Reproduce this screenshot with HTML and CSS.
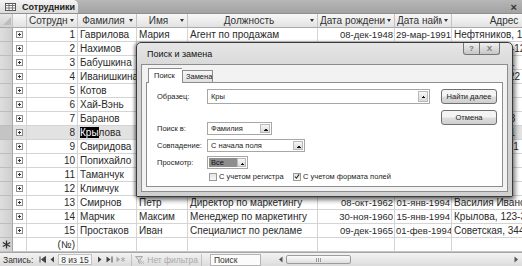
FILE: index.html
```html
<!DOCTYPE html>
<html lang="ru">
<head>
    <meta charset="UTF-8">
    <title>Сотрудники</title>
    <link rel="stylesheet" href="styles.css">
</head>
<body>
    <div class="doc-tabs">
        <div class="doc-tab">
            <svg width="11" height="8" viewBox="0 0 11 8"><rect x="0.5" y="0.5" width="10" height="7" fill="#fff" stroke="#555"/><path d="M0.5 2.5h10M0.5 5h10M4 0.5v7M7.5 0.5v7" stroke="#777" fill="none"/></svg>
            <span>Сотрудники</span>
        </div>
        <span class="doc-close">×</span>
    </div>

    <div class="sheet">
        <div class="row head">
            <div class="cell sel corner"><svg width="8" height="8" viewBox="0 0 8 8"><path d="M8 0V8H0Z" fill="#bdbdbd"/></svg></div>
            <div class="cell"></div>
            <div class="cell hcell left"><span>Сотрудник</span><i class="arrow"></i></div>
            <div class="cell hcell"><span>Фамилия</span><i class="arrow"></i></div>
            <div class="cell hcell"><span>Имя</span><i class="arrow"></i></div>
            <div class="cell hcell"><span>Должность</span><i class="arrow"></i></div>
            <div class="cell hcell left"><span>Дата рождения</span><i class="arrow"></i></div>
            <div class="cell hcell left"><span>Дата найма</span><i class="arrow"></i></div>
            <div class="cell hcell"><span>Адрес</span><i class="arrow"></i></div>
        </div>
        <div class="row"><div class="cell sel"></div><div class="cell exp"><b class="plus"></b></div><div class="cell num">1</div><div class="cell">Гаврилова</div><div class="cell">Мария</div><div class="cell">Агент по продажам</div><div class="cell num date">08-дек-1948</div><div class="cell num date">29-мар-1991</div><div class="cell">Нефтяников, 14</div></div>
        <div class="row"><div class="cell sel"></div><div class="cell exp"><b class="plus"></b></div><div class="cell num">2</div><div class="cell">Нахимов</div><div class="cell">Андрей</div><div class="cell">Вице-президент по продажам</div><div class="cell num date">19-фев-1952</div><div class="cell num date">14-авг-1992</div><div class="cell">Морская, 25-12</div></div>
        <div class="row"><div class="cell sel"></div><div class="cell exp"><b class="plus"></b></div><div class="cell num">3</div><div class="cell">Бабушкина</div><div class="cell">Ирина</div><div class="cell">Агент по продажам</div><div class="cell num date">30-авг-1963</div><div class="cell num date">01-апр-1992</div><div class="cell">Цветочная, 1</div></div>
        <div class="row"><div class="cell sel"></div><div class="cell exp"><b class="plus"></b></div><div class="cell num">4</div><div class="cell">Иванишкина</div><div class="cell">Елена</div><div class="cell">Агент по продажам</div><div class="cell num date">19-сен-1958</div><div class="cell num date">03-май-1993</div><div class="cell">Садовая, 4-22</div></div>
        <div class="row"><div class="cell sel"></div><div class="cell exp"><b class="plus"></b></div><div class="cell num">5</div><div class="cell">Котов</div><div class="cell">Степан</div><div class="cell">Менеджер по продажам</div><div class="cell num date">04-мар-1955</div><div class="cell num date">17-окт-1993</div><div class="cell">Лесная, 14-5</div></div>
        <div class="row"><div class="cell sel"></div><div class="cell exp"><b class="plus"></b></div><div class="cell num">6</div><div class="cell">Хай-Вэнь</div><div class="cell">Михаил</div><div class="cell">Агент по продажам</div><div class="cell num date">02-июл-1963</div><div class="cell num date">17-окт-1993</div><div class="cell">Луговая, 12</div></div>
        <div class="row"><div class="cell sel"></div><div class="cell exp"><b class="plus"></b></div><div class="cell num">7</div><div class="cell">Баранов</div><div class="cell">Роберт</div><div class="cell">Агент по продажам</div><div class="cell num date">29-май-1960</div><div class="cell num date">02-янв-1994</div><div class="cell">Пушкина, 8-3</div></div>
        <div class="row current"><div class="cell sel"></div><div class="cell exp"><b class="plus"></b></div><div class="cell num">8</div><div class="cell"><span class="hit">Кры</span>лова</div><div class="cell">Лаура</div><div class="cell">Координатор продаж</div><div class="cell num date">09-янв-1958</div><div class="cell num date">05-мар-1994</div><div class="cell">Кленовая, 41</div></div>
        <div class="row"><div class="cell sel"></div><div class="cell exp"><b class="plus"></b></div><div class="cell num">9</div><div class="cell">Свиридова</div><div class="cell">Анна</div><div class="cell">Агент по продажам</div><div class="cell num date">27-янв-1966</div><div class="cell num date">15-ноя-1994</div><div class="cell">Зелёная, 9-71</div></div>
        <div class="row"><div class="cell sel"></div><div class="cell exp"><b class="plus"></b></div><div class="cell num">10</div><div class="cell">Попихайло</div><div class="cell">Ольга</div><div class="cell">Агент по продажам</div><div class="cell num date">11-апр-1961</div><div class="cell num date">20-июн-1994</div><div class="cell">Чехова, 33</div></div>
        <div class="row"><div class="cell sel"></div><div class="cell exp"><b class="plus"></b></div><div class="cell num">11</div><div class="cell">Таманчук</div><div class="cell">Сергей</div><div class="cell">Агент по продажам</div><div class="cell num date">16-июл-1964</div><div class="cell num date">03-авг-1994</div><div class="cell">Кирова, 12-3</div></div>
        <div class="row"><div class="cell sel"></div><div class="cell exp"><b class="plus"></b></div><div class="cell num">12</div><div class="cell">Климчук</div><div class="cell">Нина</div><div class="cell">Секретарь</div><div class="cell num date">21-сен-1967</div><div class="cell num date">12-окт-1994</div><div class="cell">Лесная, 3-к</div></div>
        <div class="row"><div class="cell sel"></div><div class="cell exp"><b class="plus"></b></div><div class="cell num">13</div><div class="cell">Смирнов</div><div class="cell">Петр</div><div class="cell">Директор по маркетингу</div><div class="cell num date">08-окт-1962</div><div class="cell num date">01-янв-1994</div><div class="cell">Василия Иванова, 5</div></div>
        <div class="row"><div class="cell sel"></div><div class="cell exp"><b class="plus"></b></div><div class="cell num">14</div><div class="cell">Марчик</div><div class="cell">Максим</div><div class="cell">Менеджер по маркетингу</div><div class="cell num date">30-ноя-1960</div><div class="cell num date">15-янв-1994</div><div class="cell">Крылова, 123-3</div></div>
        <div class="row"><div class="cell sel"></div><div class="cell exp"><b class="plus"></b></div><div class="cell num">15</div><div class="cell">Простаков</div><div class="cell">Иван</div><div class="cell">Специалист по рекламе</div><div class="cell num date">09-дек-1965</div><div class="cell num date">01-фев-1994</div><div class="cell">Советская, 344-1</div></div>
        <div class="row new"><div class="cell sel"><svg width="9" height="9" viewBox="0 0 9 9"><path d="M4.5 0.5v8M0.8 2.5l7.4 4M0.8 6.5l7.4-4" stroke="#333" stroke-width="1.3"/></svg></div><div class="cell exp"></div><div class="cell num">(№)</div><div class="cell"></div><div class="cell"></div><div class="cell"></div><div class="cell"></div><div class="cell"></div><div class="cell"></div></div>
    </div>

    <div class="status">
        <span class="rec-label">Запись:</span>
        <svg class="nav" width="7" height="7" viewBox="0 0 7 7"><path d="M1 0.5v6M6.5 0.5v6L2.5 3.5Z" stroke="#444" fill="#444" stroke-width="1"/></svg>
        <svg class="nav" width="6" height="7" viewBox="0 0 6 7"><path d="M5 0.5v6L1.5 3.5Z" fill="#444"/></svg>
        <span class="rec-box">8 из 15</span>
        <svg class="nav" width="6" height="7" viewBox="0 0 6 7"><path d="M1 0.5v6L4.5 3.5Z" fill="#444"/></svg>
        <svg class="nav" width="7" height="7" viewBox="0 0 7 7"><path d="M0.5 0.5v6L4.5 3.5Z" fill="#444"/><path d="M6 0.5v6" stroke="#444"/></svg>
        <svg class="nav" width="9" height="7" viewBox="0 0 9 7"><path d="M0.5 0.5v6L4 3.5Z" fill="#aaa"/><path d="M7 1v5M5 2.2l4 2.6M5 4.8l4-2.6" stroke="#aaa" stroke-width="0.9"/></svg>
        <span class="filter">
            <svg width="9" height="8" viewBox="0 0 9 8"><path d="M0.5 0.5h7L5 4v3.5L3.5 6.5V4Z" fill="#ddd" stroke="#aaa"/><path d="M6 5l3 3M9 5l-3 3" stroke="#bbb"/></svg>
            Нет фильтра
        </span>
        <span class="search-box">Поиск</span>
        <div class="hscroll">
            <svg width="5" height="7" viewBox="0 0 5 7"><path d="M4.5 0.5v6L1 3.5Z" fill="#555"/></svg>
            <div class="track"><div class="thumb"><i></i></div></div>
            <svg width="5" height="7" viewBox="0 0 5 7"><path d="M0.5 0.5v6L4 3.5Z" fill="#555"/></svg>
        </div>
    </div>

    <div class="dialog">
        <div class="dlg-title">
            <span>Поиск и замена</span>
            <div class="caption-btns">
                <span class="cap help">?</span>
                <span class="cap close">X</span>
            </div>
        </div>
        <div class="dlg-client">
            <div class="dlg-tabs">
                <span class="dlg-tab active">Поиск</span>
                <span class="dlg-tab">Замена</span>
            </div>
            <div class="dlg-panel">
                <div class="dlg-form">
                    <div class="frow pattern">
                        <label>Образец:</label>
                        <div class="combo wide"><span class="val">Кры</span><i class="drop"></i></div>
                    </div>
                    <div class="frow">
                        <label>Поиск в:</label>
                        <div class="combo w-field"><span class="val">Фамилия</span><i class="drop"></i></div>
                    </div>
                    <div class="frow">
                        <label>Совпадение:</label>
                        <div class="combo w-match"><span class="val">С начала поля</span><i class="drop"></i></div>
                    </div>
                    <div class="frow">
                        <label>Просмотр:</label>
                        <div class="combo w-dir"><span class="val picked">Все</span><i class="drop"></i></div>
                    </div>
                    <div class="checks">
                        <span class="check first"><b class="box"></b>С учетом регистра</span>
                        <span class="check"><b class="box"><svg width="7" height="7" viewBox="0 0 7 7"><path d="M1 3.5l1.8 2L6 1" stroke="#222" stroke-width="1.2" fill="none"/></svg></b>С учетом формата полей</span>
                    </div>
                </div>
                <div class="dlg-buttons">
                    <span class="btn">Найти далее</span>
                    <span class="btn">Отмена</span>
                </div>
            </div>
        </div>
    </div>
</body>
</html>
```

FILE: styles.css
```css
body {
    margin: 0;
    width: 522px;
    height: 266px;
    overflow: hidden;
    position: relative;
    display: flex;
    flex-direction: column;
    font-family: "Liberation Sans", Arial, sans-serif;
    background: #fff;
    color: #2a2a2a;
}

/* document tab strip */
.doc-tabs {
    height: 14px;
    flex: none;
    display: flex;
    align-items: flex-end;
    background: linear-gradient(#b7b7b7, #a2a2a2);
    border-bottom: 1px solid #8f8f8f;
    box-sizing: border-box;
}
.doc-tab {
    height: 13px;
    width: 78px;
    display: flex;
    align-items: center;
    gap: 6px;
    padding-left: 5px;
    box-sizing: border-box;
    background: linear-gradient(#f4f4f4, #dcdcdc);
    border-radius: 0 5px 0 0;
    font-size: 9px;
    font-weight: bold;
    color: #222;
}
.doc-close {
    margin-left: auto;
    margin-right: 5px;
    align-self: center;
    font-size: 11px;
    font-weight: bold;
    line-height: 10px;
    color: #333;
}

/* datasheet */
.sheet {
    flex: none;
    width: 564px;
}
.row {
    display: grid;
    grid-template-columns: 13px 14px 51px 59px 51px 130px 77px 57px 112px;
    height: 14px;
}
.cell {
    border-right: 1px solid #d4d4d4;
    border-bottom: 1px solid #d4d4d4;
    padding: 0 2px;
    font-size: 10px;
    line-height: 13px;
    white-space: nowrap;
    overflow: hidden;
}
.num {
    text-align: right;
}
.date {
    font-size: 9.5px;
    padding: 0 1px;
}
.sel {
    padding: 0;
    background: linear-gradient(90deg, #dedede, #cfcfcf);
    border-right-color: #a6a6a6;
    border-bottom-color: #bdbdbd;
    display: flex;
    align-items: center;
    justify-content: center;
}
.corner {
    align-items: flex-end;
    justify-content: flex-end;
    padding: 0 1px 2px 0;
}
.exp {
    display: flex;
    align-items: center;
    justify-content: center;
    padding: 0;
}
.plus {
    width: 7px;
    height: 7px;
    box-sizing: border-box;
    border: 1px solid #8c8c8c;
    background:
        linear-gradient(#333, #333) center / 3px 1px no-repeat,
        linear-gradient(#333, #333) center / 1px 3px no-repeat,
        #fafafa;
}
.head .cell {
    background: linear-gradient(#f8f8f8, #e2e2e2);
    border-right-color: #c4c4c4;
    border-bottom-color: #a9a9a9;
    color: #333;
}
.head .sel {
    background: linear-gradient(#e6e6e6, #d2d2d2);
}
.hcell {
    display: flex;
    align-items: center;
    padding: 0 3px 0 2px;
}
.hcell span {
    flex: 1;
    text-align: center;
    overflow: hidden;
    text-overflow: clip;
}
.hcell.left span {
    text-align: left;
}
.arrow {
    flex: none;
    margin-left: 2px;
    border-left: 2.5px solid transparent;
    border-right: 2.5px solid transparent;
    border-top: 3px solid #333;
}
.current .cell {
    background: #e2e2e2;
}
.current .sel {
    background: #c4c4c4;
}
.hit {
    background: #000;
    color: #fff;
}
.new .cell {
    border-bottom-color: #c4c4c4;
}

/* record navigation bar */
.status {
    flex: 1;
    display: flex;
    align-items: center;
    gap: 3px;
    padding-left: 3px;
    background: linear-gradient(#f3f3f3, #dcdcdc);
    border-top: 1px solid #a6a6a6;
    font-size: 8.5px;
    color: #333;
}
.rec-label {
    margin-right: 3px;
}
.nav {
    flex: none;
}
.rec-box {
    width: 34px;
    height: 11px;
    line-height: 11px;
    padding-left: 2px;
    box-sizing: border-box;
    border: 1px solid #c2c2c2;
    background: #f8f8f8;
    margin-right: 2px;
}
.filter {
    display: flex;
    align-items: center;
    gap: 3px;
    margin-left: 3px;
    height: 12px;
    padding: 0 3px;
    border-left: 1px solid #c2c2c2;
    border-right: 1px solid #c2c2c2;
    color: #a9a9a9;
}
.search-box {
    margin-left: 5px;
    width: 51px;
    height: 12px;
    line-height: 11px;
    padding-left: 3px;
    box-sizing: border-box;
    border: 1px solid #b4b4b4;
    background: #fbfbfb;
    color: #333;
}
.hscroll {
    flex: 1;
    display: flex;
    align-items: center;
    gap: 3px;
    margin-left: 14px;
    padding-right: 3px;
}
.track {
    flex: 1;
    height: 11px;
    display: flex;
    align-items: center;
}
.thumb {
    width: 65px;
    height: 9px;
    box-sizing: border-box;
    border: 1px solid #9c9c9c;
    border-radius: 2px;
    background: linear-gradient(#fbfbfb, #dedede);
    display: flex;
    align-items: center;
    justify-content: center;
}
.thumb i {
    width: 5px;
    height: 4px;
    background: repeating-linear-gradient(90deg, #999 0 1px, transparent 1px 2px);
}

/* find & replace dialog (floats over the datasheet) */
.dialog {
    position: absolute;
    left: 136px;
    top: 42px;
    width: 377px;
    height: 155px;
    box-sizing: border-box;
    display: flex;
    flex-direction: column;
    background: linear-gradient(#e6e6e6, #d4d4d4 20%, #d0d0d0);
    border: 1px solid #3a3a3a;
    border-radius: 5px 5px 1px 1px;
    box-shadow: 2px 3px 5px rgba(0, 0, 0, 0.55), -2px 0 3px rgba(0, 0, 0, 0.35);
}
.dlg-title {
    height: 21px;
    flex: none;
    display: flex;
    align-items: center;
    padding-left: 10px;
    font-size: 9px;
    color: #111;
}
.caption-btns {
    margin-left: auto;
    margin-right: 12px;
    align-self: flex-start;
    display: flex;
}
.cap {
    height: 12px;
    box-sizing: border-box;
    border: 1px solid #767676;
    border-top: none;
    background: linear-gradient(#f0f0f0, #c6c6c6);
    font-size: 8px;
    font-weight: bold;
    line-height: 11px;
    text-align: center;
    color: #777;
}
.help {
    width: 17px;
    border-radius: 0 0 0 3px;
}
.close {
    width: 20px;
    border-left: none;
    border-radius: 0 0 3px 0;
}
.dlg-client {
    flex: 1;
    margin: 0 4px 4px;
    padding: 3px 4px 4px;
    display: flex;
    flex-direction: column;
    background: #f2f2f2;
    border: 1px solid #8c8c8c;
    font-size: 7.5px;
    color: #222;
}
.dlg-tabs {
    height: 14px;
    display: flex;
    align-items: flex-end;
    padding-left: 2px;
    position: relative;
    z-index: 1;
}
.dlg-tab {
    width: 31px;
    height: 12px;
    line-height: 11px;
    box-sizing: border-box;
    padding-left: 3px;
    border: 1px solid #8d8d8d;
    border-bottom: none;
    background: linear-gradient(#f6f6f6, #e0e0e0);
}
.dlg-tab.active {
    width: 34px;
    height: 15px;
    margin-bottom: -1px;
    padding-left: 5px;
    line-height: 13px;
    background: #fff;
    border-right: none;
}
.dlg-panel {
    flex: 1;
    display: flex;
    padding: 6px 5px 0 10px;
    background: #fff;
    border: 1px solid #8d8d8d;
}
.dlg-form {
    width: 273px;
    display: flex;
    flex-direction: column;
}
.frow {
    display: flex;
    align-items: center;
    height: 13px;
    margin-bottom: 4px;
}
.frow.pattern {
    height: 15px;
    margin-bottom: 18px;
}
.frow label {
    width: 50px;
    flex: none;
}
.combo {
    height: 100%;
    display: flex;
    align-items: center;
    box-sizing: border-box;
    border: 1px solid #a7a7a7;
    background: #fff;
    padding: 1px;
}
.combo .val {
    flex: 1;
    padding-left: 2px;
    white-space: nowrap;
}
.combo .picked {
    flex: none;
    width: 26px;
    height: 100%;
    line-height: 9px;
    background: #8d8d8d;
    color: #111;
}
.drop {
    width: 10px;
    height: 100%;
    box-sizing: border-box;
    margin-left: auto;
    border: 1px solid #b9b9b9;
    background:
        linear-gradient(135deg, transparent 50%, #111 50%) 3px 4px / 2px 2px no-repeat,
        linear-gradient(225deg, transparent 50%, #111 50%) 5px 4px / 2px 2px no-repeat,
        linear-gradient(#f6f6f6, #dadada);
}
.wide { width: 223px; }
.w-field { width: 65px; }
.w-match { width: 98px; }
.w-dir { width: 41px; }
.checks {
    display: flex;
    align-items: center;
    height: 9px;
    margin-top: -1px;
    padding-left: 52px;
}
.check {
    display: flex;
    align-items: center;
    gap: 2px;
}
.check.first {
    width: 84px;
}
.box {
    width: 8px;
    height: 8px;
    box-sizing: border-box;
    border: 1px solid #9a9a9a;
    background: linear-gradient(#e4e4e4, #f8f8f8);
    display: flex;
    align-items: center;
    justify-content: center;
}
.dlg-buttons {
    margin-left: 11px;
    display: flex;
    flex-direction: column;
    gap: 6px;
}
.btn {
    width: 56px;
    height: 15px;
    box-sizing: border-box;
    border: 1px solid #707070;
    border-radius: 3px;
    background: linear-gradient(#f4f4f4 45%, #dddddd 55%, #cfcfcf);
    text-align: center;
    line-height: 13px;
}
```
